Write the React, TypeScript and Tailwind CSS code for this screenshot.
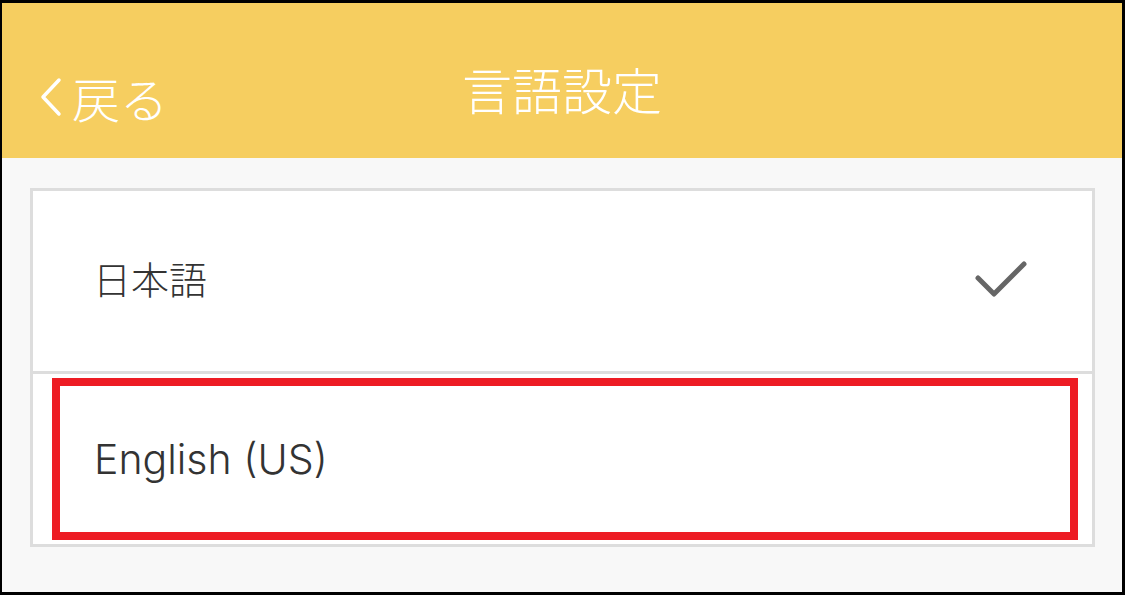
import React from 'react';

const jp = { fontFamily: '"Noto Sans CJK JP", "Noto Sans", sans-serif' };
const en = { fontFamily: 'Inter, "Noto Sans CJK JP", sans-serif' };

function BackChevron() {
  return (
    <svg width="26" height="40" viewBox="0 0 26 40" className="shrink-0">
      <path d="M21 3 L5 20 L21 37" fill="none" stroke="white" strokeWidth="3.5" strokeLinecap="round" strokeLinejoin="round" />
    </svg>
  );
}

function Check() {
  return (
    <svg width="54" height="40" viewBox="0 0 54 40">
      <path d="M4 18 L20 34 L50 4" fill="none" stroke="#666666" strokeWidth="5" strokeLinecap="round" strokeLinejoin="round" />
    </svg>
  );
}

export default function App() {
  return (
    <div className="w-[1125px] h-[595px] bg-black pt-[3px] pl-[2px] pr-[3px] pb-[3px]">
      <div className="w-full h-full flex flex-col bg-[#f8f8f8]">
        {/* header */}
        <div className="h-[155px] bg-[#f6ce60] relative flex items-center justify-center shrink-0">
          <div className="absolute left-[36px] top-[70px] flex items-center gap-[8px] text-white text-[48px] leading-none font-light" style={jp}>
            <BackChevron />
            <span>戻る</span>
          </div>
          <div className="text-white text-[50px] leading-none mt-[14px] font-light" style={jp}>言語設定</div>
        </div>

        {/* list */}
        <div className="pt-[30px] pl-[28px] pr-[27px]">
          <div className="border-[3px] border-[#dddddd] bg-white">
            <div className="h-[180px] flex items-center justify-between pl-[60px] pr-[64px]">
              <span className="text-[38px] text-[#333333] leading-none mt-[-6px] font-light" style={jp}>日本語</span>
              <div className="mt-[-2px]"><Check /></div>
            </div>
            <div className="h-[3px] bg-[#dddddd]" />
            <div className="h-[170px] relative flex items-center pl-[61px]">
              <span className="text-[41px] text-[#333333] leading-none mt-[0px] font-light" style={en}>English (US)</span>
              <div className="absolute left-[19px] top-[4px] w-[1026px] h-[162px] border-[8px] border-[#ed1c24]" />
            </div>
          </div>
        </div>
      </div>
    </div>
  );
}
